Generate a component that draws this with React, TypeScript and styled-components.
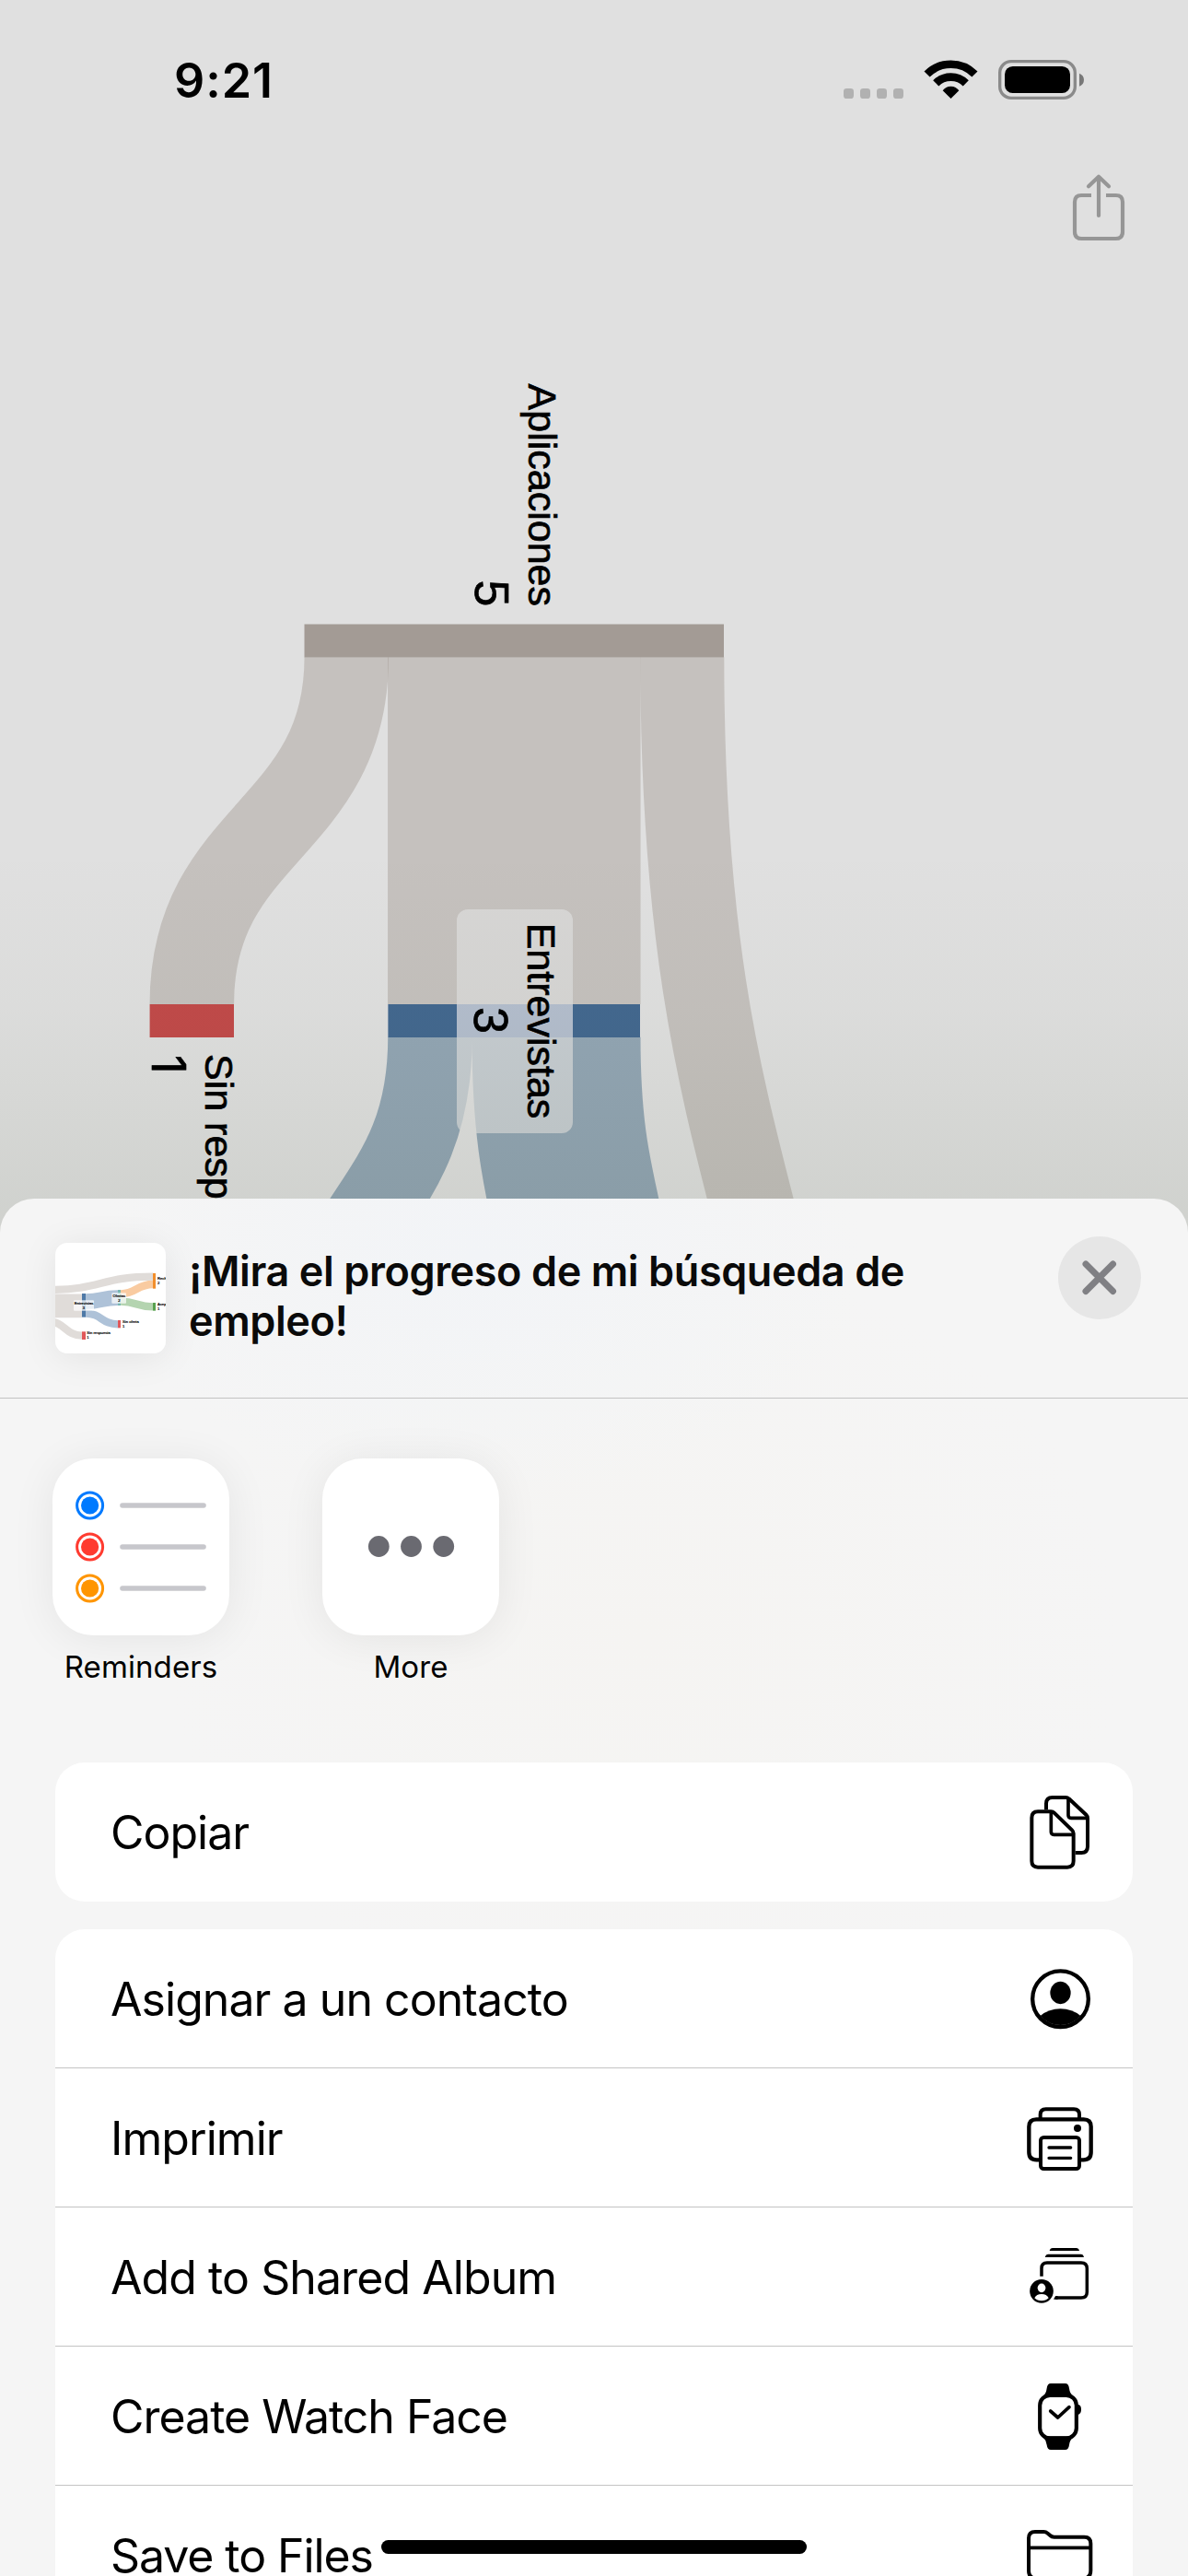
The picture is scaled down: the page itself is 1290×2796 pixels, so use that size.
import React from "react";
import styled, { createGlobalStyle } from "styled-components";

const GlobalStyle = createGlobalStyle`
  *, *::before, *::after { box-sizing: border-box; }
  body { margin: 0; background: #e0e0e0; }
  svg { display: block; flex: none; }
`;

const Screen = styled.main`
  position: relative;
  display: flex;
  flex-direction: column;
  width: 1290px;
  height: 2796px;
  overflow: hidden;
  background: #e0e0e0;
  color: #000;
  font-family: Inter, "Liberation Sans", sans-serif;
`;

const StatusBar = styled.header`
  display: flex;
  flex: none;
  justify-content: space-between;
  height: 185px;
  padding: 60px 110px 0 189px;
`;

const Clock = styled.time`
  font-size: 52px;
  font-weight: 600;
  line-height: 56px;
  letter-spacing: 0.9px;
`;

const NavBar = styled.nav`
  display: flex;
  flex: none;
  justify-content: flex-end;
  height: 115px;
  padding-right: 63px;
`;

const PlainButton = styled.button`
  display: flex;
  align-items: flex-start;
  border: 0;
  padding: 0;
  background: none;
`;

const Sheet = styled.section`
  position: absolute;
  inset: 1301px 0 0 0;
  display: flex;
  flex-direction: column;
  overflow: hidden;
  border-radius: 37px 37px 0 0;
  background:
    radial-gradient(420px 260px at 520px 60px, #f2f4f7, rgba(242, 244, 247, 0)),
    radial-gradient(520px 420px at 700px 480px, #f5f4f2, rgba(245, 244, 242, 0)),
    #f5f5f5;
`;

const SheetHeader = styled.div`
  display: flex;
  flex: none;
  align-items: flex-start;
  height: 217px;
  padding: 48px 51px 0 60px;
  border-bottom: 1px solid #c3c3c3;
`;

const Thumbnail = styled.div`
  width: 120px;
  height: 120px;
  border-radius: 13px;
  overflow: hidden;
  background: #fff;
  box-shadow: 0 4px 40px rgba(0, 0, 0, 0.08);
`;

const Title = styled.h1`
  flex: 1;
  margin: 4px 0 0 25px;
  max-width: 820px;
  color: #0a0a0a;
  font-size: 45px;
  font-weight: 600;
  line-height: 54px;
  letter-spacing: -0.42px;
`;

const CloseButton = styled.button`
  display: flex;
  align-items: center;
  justify-content: center;
  width: 90px;
  height: 90px;
  margin: -7px 0 0 auto;
  padding: 0;
  border: 0;
  border-radius: 50%;
  background: #e6e6e6;
`;

const AppRow = styled.div`
  display: flex;
  flex: none;
  gap: 101px;
  height: 395px;
  padding: 65px 57px 0;
`;

const AppItem = styled.div`
  display: flex;
  flex-direction: column;
  align-items: center;
  width: 192px;
`;

const AppTile = styled.div`
  width: 192px;
  height: 192px;
  border-radius: 44px;
  background: #fff;
  box-shadow: 0 4px 48px rgba(0, 0, 0, 0.07);
`;

const AppLabel = styled.span`
  margin-top: 14px;
  font-size: 33px;
  line-height: 40px;
  letter-spacing: 0.1px;
`;

const ActionGroup = styled.ul`
  display: flex;
  flex: none;
  flex-direction: column;
  margin: 0 60px 30px;
  padding: 0;
  list-style: none;
  overflow: hidden;
  border-radius: 32px;
  background: #fff;
`;

const ActionRow = styled.li`
  display: flex;
  align-items: center;
  justify-content: space-between;
  height: 151px;
  padding: 0 42px 0 60px;

  &:not(:last-child) {
    box-shadow: inset 0 -1px #c4c4c4;
  }
`;

const ActionLabel = styled.span<{ $tracking: number }>`
  font-size: 50px;
  line-height: 60px;
  letter-spacing: ${(p) => p.$tracking}px;
`;

const HomeIndicator = styled.div`
  position: absolute;
  bottom: 24px;
  left: 414px;
  width: 462px;
  height: 15px;
  border-radius: 8px;
  background: #000;
`;

const StatusIcons = () => (
  <svg width="267" height="50" viewBox="39 30 801 150" fill="none">
    {[48, 102, 156, 210].map((x) => (
      <rect key={x} x={x} y="138" width="33" height="33" rx="10" fill="#b1b1b1" />
    ))}
    <path d="M319.7 91.5A110 110 0 0 1 475.3 91.5M348.7 121A69 69 0 0 1 446.3 121" stroke="#000" strokeWidth="26" />
    <path d="M397.5 171L371 145Q380 131 397.5 131Q415 131 424 145Z" fill="#000" />
    <rect x="557" y="50" width="245" height="119" rx="37" stroke="#8a8a8a" strokeWidth="10" />
    <rect x="573" y="66" width="213" height="87" rx="26" fill="#000" />
    <path d="M816 89Q831 95 831 110Q831 125 816 131Z" fill="#787878" />
  </svg>
);

const ShareIcon = () => (
  <svg width="67" height="80" viewBox="780 405 201 240" fill="none" stroke="#969696" strokeWidth="12.5">
    <path d="M855 486H823Q801 486 801 508V605Q801 627 823 627H935Q957 627 957 605V508Q957 486 935 486H903" />
    <path d="M879 552V427M846 457L879 425L912 457" strokeLinecap="round" strokeLinejoin="round" />
  </svg>
);

const CloseIcon = () => (
  <svg width="44" height="44" viewBox="0 0 44 44" stroke="#808084" strokeWidth="7" strokeLinecap="round">
    <path d="M7 7L36.5 36.5M36.5 7L7 36.5" />
  </svg>
);

const SankeyChart = () => (
  <svg width="1290" height="1040" viewBox="0 300 1290 1040" fill="none">
    <defs>
      <linearGradient id="shade" x1="0" y1="920" x2="0" y2="1310" gradientUnits="userSpaceOnUse">
        <stop offset="0" stopColor="#283c14" stopOpacity="0" />
        <stop offset="0.45" stopColor="#283c14" stopOpacity="0.025" />
        <stop offset="1" stopColor="#283c14" stopOpacity="0.085" />
      </linearGradient>
    </defs>
    <g stroke="#a39b95" strokeOpacity="0.45">
      <path d="M376.3 713.3C376.3 901.7 208.3 901.7 208.3 1090" strokeWidth="91.5" />
      <path d="M558.3 713.3V1090" strokeWidth="274.5" />
      <path d="M740.8 713.3C740.8 1313.5 895 1313.5 895 1914" strokeWidth="91" />
    </g>
    <g stroke="#436b88" strokeOpacity="0.49">
      <path d="M467 1125.7C467 1314 342 1314 342 1502" strokeWidth="91.5" />
      <path d="M604 1125.7C604 1314 645 1314 645 1502" strokeWidth="183" />
    </g>
    <rect x="330.5" y="677.5" width="455.5" height="36" fill="#a39b95" />
    <rect x="162.6" y="1090" width="91.4" height="36" fill="#c24a4a" />
    <rect x="421.4" y="1090" width="273.6" height="36" fill="#436890" />
    <rect x="496" y="987" width="126" height="243" rx="12" fill="#e0e0e0" fillOpacity="0.68" />
    <rect x="496" y="1090" width="126" height="36" fill="#b7c0d2" fillOpacity="0.7" />
    <rect y="900" width="1290" height="440" fill="url(#shade)" />
    <g fill="#000" stroke="#000" strokeWidth="0.7" fontFamily='"Liberation Sans", Arial, sans-serif' fontSize="43">
      <text transform="translate(573.8 658) rotate(90)" textAnchor="end">Aplicaciones</text>
      <text transform="translate(515.5 658.5) rotate(90)" textAnchor="end" fontSize="52">5</text>
      <text transform="translate(572.8 1108) rotate(90)" textAnchor="middle">Entrevistas</text>
      <text transform="translate(514.5 1107.5) rotate(90)" textAnchor="middle" fontSize="52">3</text>
      <text transform="translate(222.8 1144) rotate(90)">Sin resp</text>
      <text transform="translate(164.8 1145) rotate(90)" fontFamily="Inter, sans-serif" fontSize="51">1</text>
    </g>
  </svg>
);

const MiniChart = () => (
  <svg width="120" height="120" viewBox="60 57 360 360" fill="none">
    <g stroke="#e0dcd9">
      <path d="M40 210C210 210 210 167 378 167" strokeWidth="25" />
      <path d="M40 262H147" strokeWidth="77" />
      <path d="M38 314C93 314 93 359 147 359" strokeWidth="25" />
    </g>
    <g stroke="#aec2d8">
      <path d="M159 248C211 248 211 236 264 236" strokeWidth="50" />
      <path d="M159 287C211 287 211 322 264 322" strokeWidth="25" />
    </g>
    <path d="M273 223C325 223 325 192 378 192" stroke="#f9cba1" strokeWidth="25" />
    <path d="M273 248C325 248 325 265 378 265" stroke="#b4d4b0" strokeWidth="25" />
    <rect x="147" y="222" width="12" height="77" fill="#4e79a7" />
    <rect x="147" y="346" width="12" height="26" fill="#e15759" />
    <rect x="264" y="210" width="9" height="51" fill="#76b7b2" />
    <rect x="264" y="309" width="9" height="25" fill="#e15759" />
    <rect x="378" y="156" width="9" height="50" fill="#f28e2b" />
    <rect x="378" y="252" width="9" height="26" fill="#59a14f" />
    <rect x="120" y="244" width="66" height="34" rx="3" fill="#fff" fillOpacity="0.72" />
    <rect x="244" y="220" width="47" height="34" rx="3" fill="#fff" fillOpacity="0.72" />
    <g fill="#000" stroke="#000" strokeWidth="0.6" fontFamily='"Liberation Sans", Arial, sans-serif' fontSize="12.5">
      <text x="153" y="258" textAnchor="middle">Entrevistas</text>
      <text x="153" y="273" textAnchor="middle">3</text>
      <text x="268" y="234" textAnchor="middle">Ofertas</text>
      <text x="268" y="249" textAnchor="middle">2</text>
      <text x="393" y="177">Rech</text>
      <text x="393" y="191">2</text>
      <text x="393" y="262">Acep</text>
      <text x="393" y="276">1</text>
      <text x="279" y="318">Sin oferta</text>
      <text x="279" y="332">1</text>
      <text x="163" y="355">Sin respuesta</text>
      <text x="163" y="370">1</text>
    </g>
  </svg>
);

const RemindersIcon = () => (
  <svg width="192" height="192" viewBox="0 0 192 192" fill="none">
    {["#007aff", "#ff3b30", "#ff9500"].map((color, i) => (
      <g key={color} transform={`translate(0 ${51 + i * 45})`}>
        <circle cx="40.6" r="14" stroke={color} strokeWidth="3" />
        <circle cx="40.6" r="9.6" fill={color} />
        <path d="M76 0H164" stroke="#c7c7cc" strokeWidth="5.6" strokeLinecap="round" />
      </g>
    ))}
  </svg>
);

const MoreIcon = () => (
  <svg width="192" height="192" viewBox="0 0 192 192" fill="#6a6a71">
    <circle cx="61.3" cy="95.5" r="11.4" />
    <circle cx="96.5" cy="95.5" r="11.4" />
    <circle cx="131.7" cy="95.5" r="11.4" />
  </svg>
);

const RowIcon = ({ top, children }: { top: number; children: React.ReactNode }) => (
  <svg width="75" height="81" viewBox={`99 ${top} 225 243`} fill="none" stroke="#000" strokeWidth="12">
    {children}
  </svg>
);

const CopyIcon = () => (
  <RowIcon top={144}>
    <path d="M141 199H184Q190 199 194 203L252 259Q257 264 257 270V360Q257 380 237 380H141Q121 380 121 360V219Q121 199 141 199Z" />
    <path d="M184 200V265Q184 274 193 274H256" strokeWidth="11" />
    <path d="M168 193V173Q168 153 188 153H232Q238 153 242 157L298 209Q303 214 303 221V313Q303 333 283 333H263" />
    <path d="M240 156V211Q240 220 249 220H302" strokeWidth="11" />
  </RowIcon>
);

const ContactIcon = () => (
  <RowIcon top={687}>
    <circle cx="214.5" cy="809" r="91" strokeWidth="13" />
    <ellipse cx="214.5" cy="789" rx="33.5" ry="36.5" fill="#000" stroke="none" />
    <path d="M149 864Q177 841 214.5 841Q252 841 280 864A86 86 0 0 1 149 864Z" fill="#000" stroke="none" />
  </RowIcon>
);

const PrinterIcon = () => (
  <RowIcon top={150}>
    <path d="M145 343H137Q112 343 112 318V235Q112 211 136 211H290Q314 211 314 235V318Q314 343 289 343H281" strokeWidth="13" />
    <path d="M149 208V196Q149 178 167 178H258Q276 178 276 196V208" />
    <rect x="150" y="270" width="126" height="102" rx="10" />
    <circle cx="270" cy="240" r="12" fill="#000" stroke="none" />
    <path d="M177 303H248M177 337H248" strokeWidth="10" strokeLinecap="round" />
  </RowIcon>
);

const AlbumIcon = () => (
  <RowIcon top={603}>
    <path d="M179 639Q181 630 189 630H266Q274 630 276 639ZM164 660Q167 650 175 650H281Q289 650 291 660Z" fill="#000" stroke="none" />
    <path d="M153 722V696Q153 678 171 678H282Q301 678 301 697V773Q301 792 282 792H198" strokeWidth="10.5" />
    <path d="M192 797L198 787H206V797Z" fill="#000" stroke="none" />
    <circle cx="153" cy="770.5" r="38.5" fill="#000" stroke="none" />
    <ellipse cx="153" cy="760" rx="13" ry="14.5" fill="#fff" stroke="none" />
    <path d="M130 793Q136 780 153 780Q170 780 176 793Q167 802 153 802Q139 802 130 793Z" fill="#fff" stroke="none" />
  </RowIcon>
);

const WatchIcon = () => (
  <RowIcon top={126}>
    <rect x="147.5" y="179.5" width="119" height="140" rx="33" strokeWidth="12.5" />
    <path d="M160 180Q168 173 170 157Q172 141 183 141H230Q241 141 243 157Q245 173 254 180L240 186H173Z" fill="#000" stroke="none" />
    <path d="M160 319Q168 326 170 341Q172 357 183 357H230Q241 357 243 341Q245 326 254 319L240 313H173Z" fill="#000" stroke="none" />
    <path d="M270 210H274Q282 213 282 226Q282 239 274 242H270Z" fill="#000" stroke="none" />
    <path d="M182 231L206 252L243 218" strokeWidth="11" strokeLinecap="round" strokeLinejoin="round" />
  </RowIcon>
);

const FolderIcon = () => (
  <RowIcon top={579}>
    <path d="M111 750V645Q111 624 132 624H160Q167 624 173 629L181 636Q186 641 194 641H292Q313 641 313 662V750Q313 776 288 776H136Q111 776 111 750Z" />
    <path d="M111 676H313" strokeWidth="11" />
  </RowIcon>
);

type Action = { label: string; tracking: number; Icon: () => React.ReactElement };

const groups: Action[][] = [
  [{ label: "Copiar", tracking: -1, Icon: CopyIcon }],
  [
    { label: "Asignar a un contacto", tracking: -0.95, Icon: ContactIcon },
    { label: "Imprimir", tracking: -0.95, Icon: PrinterIcon },
    { label: "Add to Shared Album", tracking: -0.93, Icon: AlbumIcon },
    { label: "Create Watch Face", tracking: -1.02, Icon: WatchIcon },
    { label: "Save to Files", tracking: -1.08, Icon: FolderIcon },
  ],
];

export default function App() {
  return (
    <>
      <GlobalStyle />
      <Screen>
        <StatusBar>
          <Clock>9:21</Clock>
          <StatusIcons />
        </StatusBar>
        <NavBar>
          <PlainButton aria-label="Compartir">
            <ShareIcon />
          </PlainButton>
        </NavBar>
        <SankeyChart />
        <Sheet>
          <SheetHeader>
            <Thumbnail>
              <MiniChart />
            </Thumbnail>
            <Title>
              ¡Mira el progreso de mi búsqueda de
              <br />
              empleo!
            </Title>
            <CloseButton aria-label="Cerrar">
              <CloseIcon />
            </CloseButton>
          </SheetHeader>
          <AppRow>
            <AppItem>
              <AppTile>
                <RemindersIcon />
              </AppTile>
              <AppLabel>Reminders</AppLabel>
            </AppItem>
            <AppItem>
              <AppTile>
                <MoreIcon />
              </AppTile>
              <AppLabel>More</AppLabel>
            </AppItem>
          </AppRow>
          {groups.map((actions) => (
            <ActionGroup key={actions[0].label}>
              {actions.map(({ label, tracking, Icon }) => (
                <ActionRow key={label}>
                  <ActionLabel $tracking={tracking}>{label}</ActionLabel>
                  <Icon />
                </ActionRow>
              ))}
            </ActionGroup>
          ))}
        </Sheet>
        <HomeIndicator />
      </Screen>
    </>
  );
}
